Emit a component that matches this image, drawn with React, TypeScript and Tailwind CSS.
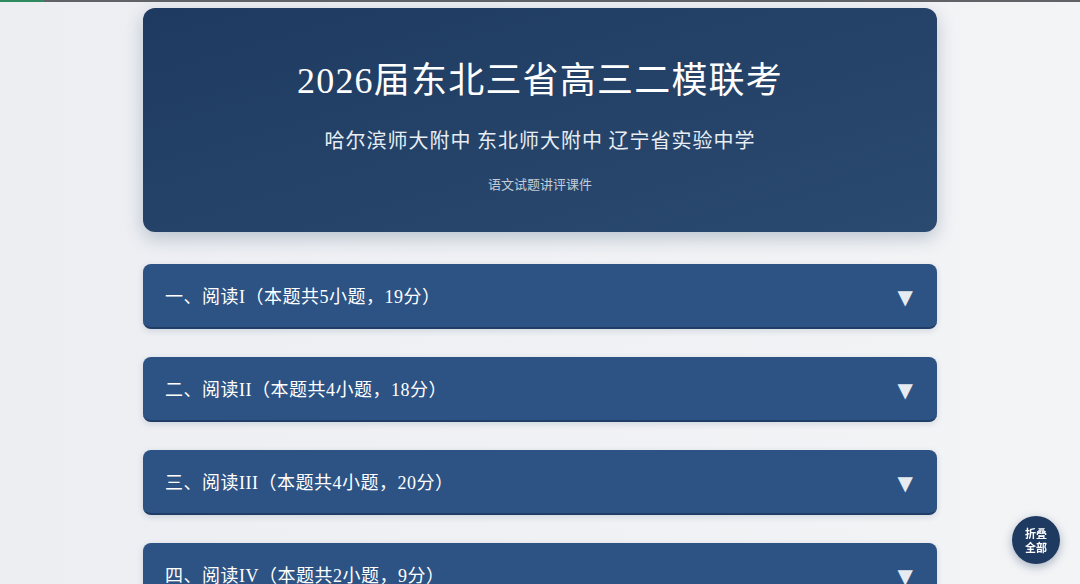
const sections = [
  "一、阅读I（本题共5小题，19分）",
  "二、阅读II（本题共4小题，18分）",
  "三、阅读III（本题共4小题，20分）",
  "四、阅读IV（本题共2小题，9分）",
];

function SectionHeader({ title }: { title: string }) {
  return (
    <div className="h-[65px] rounded-lg bg-[#2d5384] border-b-2 border-[#1f3d66] shadow-[0_2px_6px_rgba(30,58,95,0.15)] flex items-center justify-between pl-[22px] pr-[24px] pt-[4px]">
      <span className="text-[18px] tracking-[0.5px] text-white font-['Liberation_Serif','Noto_Sans_CJK_SC',serif]">
        {title}
      </span>
      <span className="text-[20px] text-[#e6ebf2] leading-none font-['DejaVu_Sans',sans-serif]">▼</span>
    </div>
  );
}

export default function App() {
  return (
    <div className="min-h-screen bg-gradient-to-r from-[#eceef2] via-[#eff1f4] to-[#f3f4f6] font-['Noto_Sans_CJK_SC',sans-serif]">
      {/* reading progress */}
      <div className="fixed top-0 left-0 right-0 h-[2px] bg-[#5f6266] z-20">
        <div className="h-full w-[44px] bg-[#2f8a62]" />
      </div>

      <div className="w-[794px] mx-auto pt-2 pb-10">
        <header className="rounded-xl bg-gradient-to-br from-[#1e3a60] to-[#2b4a70] shadow-[0_6px_18px_rgba(30,58,95,0.25)] pt-[52px] pb-[37px] text-center">
          <h1 className="text-[36px] leading-[1.2] tracking-[1.2px] text-white font-['Liberation_Serif','Noto_Sans_CJK_SC',serif]">
            2026届东北三省高三二模联考
          </h1>
          <p className="mt-[22px] text-[20px] leading-[1.5] tracking-[1px] text-[#e8edf4]">
            哈尔滨师大附中 东北师大附中 辽宁省实验中学
          </p>
          <p className="mt-[20px] text-[13px] leading-[1.5] text-[#c3ccd8] font-['Liberation_Serif','Noto_Sans_CJK_SC',serif]">
            语文试题讲评课件
          </p>
        </header>

        <div className="mt-[32px] flex flex-col gap-[28px]">
          {sections.map((s) => (
            <SectionHeader key={s} title={s} />
          ))}
        </div>
      </div>

      <button className="fixed right-5 bottom-5 w-12 h-12 rounded-full bg-[#1e3a60] shadow-[0_3px_10px_rgba(30,58,95,0.35)] text-white text-[11px] font-bold leading-[1.3] flex items-center justify-center">
        折叠
        <br />
        全部
      </button>
    </div>
  );
}
